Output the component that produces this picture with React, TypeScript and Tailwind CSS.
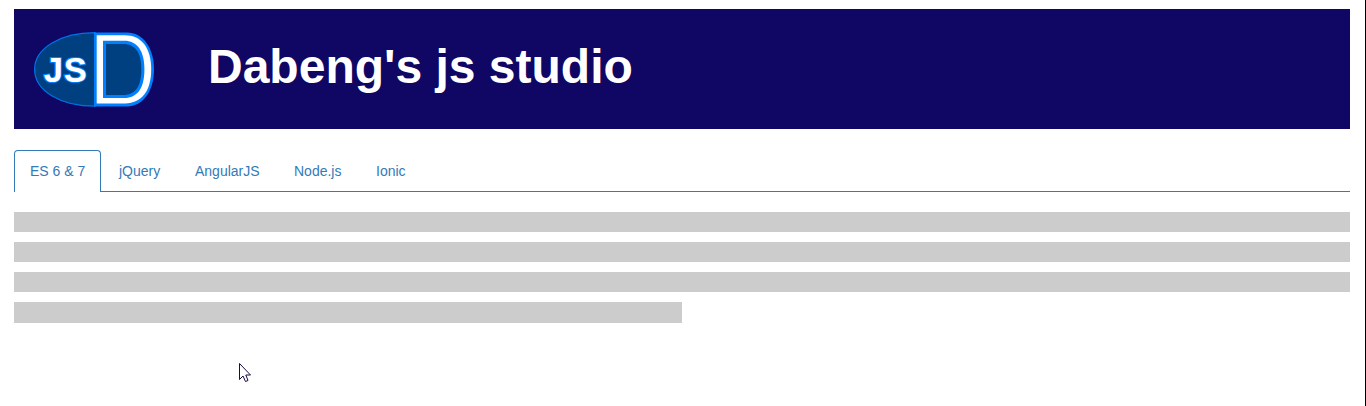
import React, { useState } from "react";

const tabs = [
  { label: "ES 6 & 7", width: "w-[87px]" },
  { label: "jQuery", width: "w-[74px]" },
  { label: "AngularJS", width: "w-[97px]" },
  { label: "Node.js", width: "w-[80px]" },
  { label: "Ionic", width: "w-[62px]" },
];

function Logo() {
  return (
    <svg className="block h-[76px] w-[122px] shrink-0" viewBox="33 32 122 76">
      <path d="M95 32.7C61 32.7 34.6 48 34.6 69.5S61 106.2 95 106.2Z" fill="#003f80" stroke="#0072e6" strokeWidth="1.2" />
      <path d="M94 32.5H127C143 32.5 154 48 154 69.5S143 106.4 127 106.4H94Z" fill="#007fff" />
      <path d="M96.7 35.3H125C141.5 35.3 151.2 48 151.2 69.5S141.5 103.4 125 103.4H96.7Z" fill="#fff" />
      <path d="M103 40.7H124C137.5 40.7 144.4 51 144.4 69.5S137.5 98 124 98H103Z" fill="#007fff" />
      <path d="M106 44H123C135 44 141.3 52 141.3 69.5S135 95 123 95H106Z" fill="#003f80" />
      <text x="43.7" y="81.8" textLength="43" fontFamily="Liberation Sans, Arial, sans-serif" fontWeight="bold" fontSize="34.5" fill="#fff" stroke="#007fff" strokeWidth="2.2" paintOrder="stroke">JS</text>
    </svg>
  );
}

export default function App() {
  const [active, setActive] = useState(0);
  return (
    <div className="relative h-[406px] overflow-hidden border-r border-black bg-white pt-[9px] pr-[15px] pl-[14px] font-['Liberation_Sans',Arial,sans-serif]">
      <header className="flex h-[120px] items-start bg-[#100663] pt-[23px] pl-[19px]">
        <Logo />
        <h1 className="ml-[53px] text-[48px] leading-[70px] font-bold whitespace-nowrap text-white">Dabeng's js studio</h1>
      </header>
      <nav className="mt-[21px] flex h-[42px] gap-[2px] border-b border-[#337ab7]">
        {tabs.map(({ label, width }, i) => (
          <button
            key={label}
            onClick={() => setActive(i)}
            className={
              i === active
                ? `${width} h-[42px] shrink-0 rounded-t border border-b-0 border-[#337ab7] bg-white pb-px pl-[15px] text-left text-sm whitespace-nowrap text-[#337ab7]`
                : `${width} h-[42px] shrink-0 border border-transparent pl-[15px] text-left text-sm whitespace-nowrap text-[#337ab7]`
            }
          >
            {label}
          </button>
        ))}
      </nav>
      <main className="mt-5 flex flex-col gap-[10px]">
        <div className="h-5 bg-[#ccc]" />
        <div className="h-5 bg-[#ccc]" />
        <div className="h-5 bg-[#ccc]" />
        <div className="h-[21px] w-1/2 bg-[#ccc]" />
      </main>
      <svg className="absolute top-[362px] left-[238px] h-[21px] w-[14px]" viewBox="0 0 14 21">
        <path d="M1.5 1.5V17.5L5 14L7.5 19.5L10 18.5L7.8 13H12.5Z" fill="#fff" stroke="#1c0b3c" />
      </svg>
    </div>
  );
}
